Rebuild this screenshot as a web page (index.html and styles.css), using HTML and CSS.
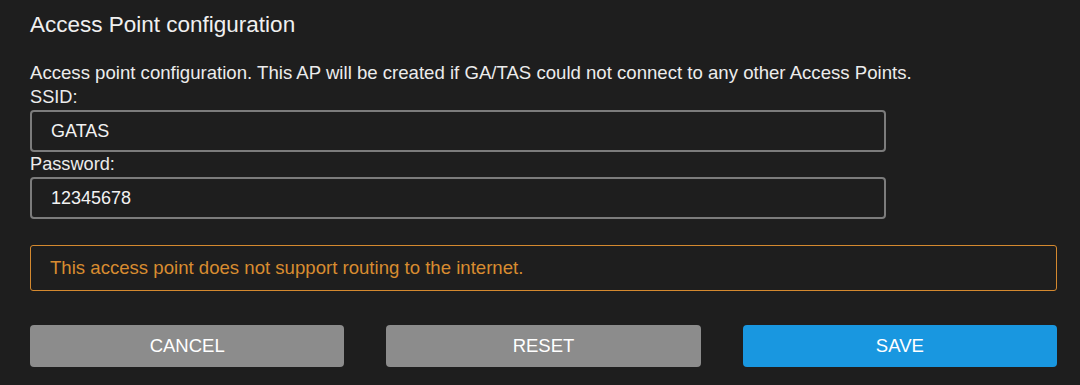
FILE: index.html
```html
<!DOCTYPE html>
<html lang="en">
<head>
    <meta charset="UTF-8">
    <meta name="viewport" content="width=device-width, initial-scale=1.0">
    <title>Access Point configuration</title>
    <link rel="stylesheet" href="styles.css">
</head>
<body>
    <div class="panel">
        <h2 class="title">Access Point configuration</h2>

        <p class="description">Access point configuration. This AP will be created if GA/TAS could not connect to any other Access Points.</p>

        <label class="field-label" for="ssid">SSID:</label>
        <input class="field-input" type="text" id="ssid" value="GATAS">

        <label class="field-label" for="password">Password:</label>
        <input class="field-input" type="text" id="password" value="12345678">

        <div class="warning">This access point does not support routing to the internet.</div>

        <div class="actions">
            <button class="btn btn-secondary">CANCEL</button>
            <button class="btn btn-secondary">RESET</button>
            <button class="btn btn-primary">SAVE</button>
        </div>
    </div>
</body>
</html>
```

FILE: styles.css
```css
* {
    margin: 0;
    padding: 0;
    box-sizing: border-box;
    font-family: 'Liberation Sans', Arial, Helvetica, sans-serif;
}

body {
    background: #1e1e1e;
    color: #ececec;
    width: 1080px;
    height: 385px;
    overflow: hidden;
}

.panel {
    padding: 13px 23px 0 30px;
    display: flex;
    flex-direction: column;
    align-items: flex-start;
}

.title {
    font-size: 22.5px;
    font-weight: 400;
    line-height: 24px;
    color: #f0f0f0;
}

.description {
    margin-top: 24px;
    font-size: 18.6px;
    line-height: 24px;
}

.field-label {
    font-size: 18.2px;
    line-height: 24px;
}

.field-input {
    width: 856px;
    height: 42px;
    margin-top: 1px;
    padding: 0 19px;
    background: #1e1e1e;
    border: 2px solid #7c7c7c;
    border-radius: 4px;
    color: #f2f2f2;
    font-size: 18px;
    outline: none;
}

.warning {
    align-self: stretch;
    margin-top: 26px;
    height: 46px;
    padding: 0 19px;
    display: flex;
    align-items: center;
    border: 1px solid #d4892f;
    border-radius: 3px;
    color: #d88c30;
    font-size: 18.6px;
}

.actions {
    align-self: stretch;
    margin-top: 34px;
    display: grid;
    grid-template-columns: repeat(3, 1fr);
    gap: 42px;
}

.btn {
    height: 42px;
    border: none;
    border-radius: 4px;
    color: #fff;
    font-size: 18.5px;
    cursor: pointer;
}

.btn-secondary {
    background: #8c8c8c;
}

.btn-primary {
    background: #1997e0;
}
```
